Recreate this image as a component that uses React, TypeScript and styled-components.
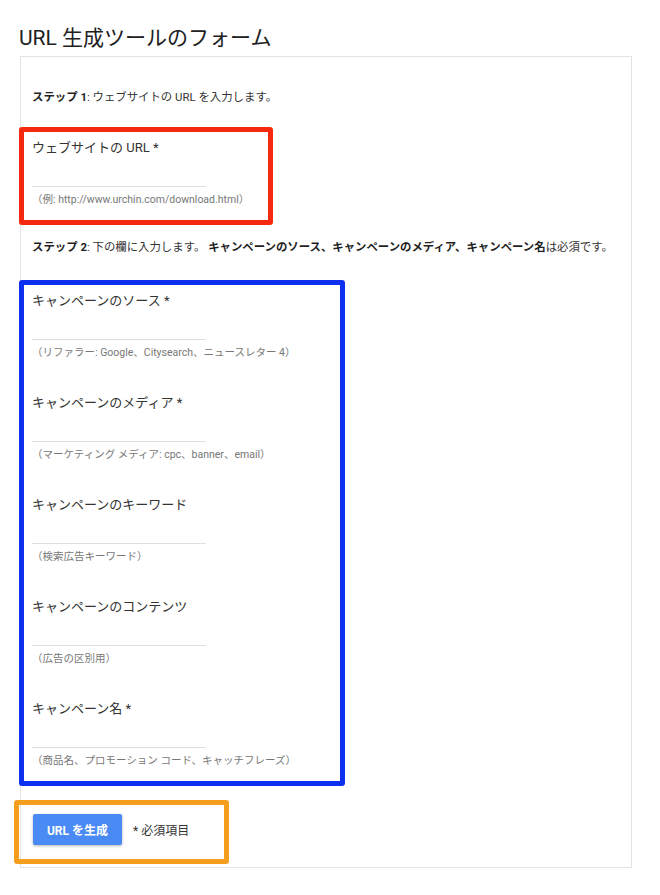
import styled, { createGlobalStyle } from "styled-components";

type Field = {
  label: string;
  required?: boolean;
  hint: string;
};

const GlobalStyle = createGlobalStyle`
  html, body {
    margin: 0;
    padding: 0;
    background: #ffffff;
  }
  body {
    font-family: "Roboto", "Noto Sans CJK JP", sans-serif;
    color: #333333;
  }
`;

const Page = styled.div`
  width: 660px;
  padding-left: 19px;
  box-sizing: border-box;
`;

const Title = styled.h1`
  margin: 24px 0 4px 0;
  font-size: 21px;
  line-height: 28px;
  font-weight: 400;
  color: #212121;
`;

const Card = styled.div`
  width: 612px;
  box-sizing: border-box;
  border: 1px solid #e3e3e3;
  padding: 32px 0 3px 11px;
  margin-left: 1px;
`;

const Step = styled.p<{ $top?: number }>`
  margin: ${(p) => p.$top ?? 0}px 0 0 0;
  font-size: 11.4px;
  line-height: 16px;
  color: #333333;
  b {
    font-weight: 700;
    color: #1f1f1f;
  }
`;

const Highlight = styled.div<{ $color: string; $width: number; $top: number }>`
  width: ${(p) => p.$width}px;
  box-sizing: border-box;
  border: 5px solid ${(p) => p.$color};
  border-radius: 3px;
  margin-left: -13px;
  margin-top: ${(p) => p.$top}px;
  padding: 6px 0 12px 8px;
`;

const FieldList = styled.div`
  display: flex;
  flex-direction: column;
  gap: 32px;
`;

const FieldBox = styled.div`
  display: flex;
  flex-direction: column;
`;

const Label = styled.label`
  font-size: 13px;
  line-height: 20px;
  color: #333333;
`;

const Input = styled.div`
  width: 174px;
  height: 28px;
  border-bottom: 1px solid #e0e0e0;
`;

const Hint = styled.div`
  margin-top: 5px;
  font-size: 10.5px;
  line-height: 16px;
  color: #777777;
`;

const Actions = styled.div`
  width: 215px;
  box-sizing: border-box;
  border: 5px solid #f59d1c;
  border-radius: 3px;
  margin: 14px 0 0 -18px;
  padding: 9px 0 14px 14px;
  display: flex;
  align-items: center;
  gap: 11px;
`;

const Button = styled.button`
  width: 89px;
  height: 31px;
  border: none;
  border-radius: 2px;
  background: #4a8af4;
  color: #ffffff;
  font-family: "Roboto", "Noto Sans CJK JP", sans-serif;
  font-size: 12px;
  font-weight: 700;
  box-shadow: 0 1px 3px rgba(0, 0, 0, 0.3);
  padding: 0;
`;

const Note = styled.span`
  font-size: 12px;
  color: #333333;
`;

const fields: Field[] = [
  {
    label: "キャンペーンのソース",
    required: true,
    hint: "（リファラー: Google、Citysearch、ニュースレター 4）",
  },
  {
    label: "キャンペーンのメディア",
    required: true,
    hint: "（マーケティング メディア: cpc、banner、email）",
  },
  { label: "キャンペーンのキーワード", hint: "（検索広告キーワード）" },
  { label: "キャンペーンのコンテンツ", hint: "（広告の区別用）" },
  {
    label: "キャンペーン名",
    required: true,
    hint: "（商品名、プロモーション コード、キャッチフレーズ）",
  },
];

const FormField = ({ label, required, hint }: Field) => (
  <FieldBox>
    <Label>
      {label}
      {required ? " *" : ""}
    </Label>
    <Input />
    <Hint>{hint}</Hint>
  </FieldBox>
);

export default function App() {
  return (
    <Page>
      <GlobalStyle />
      <Title>URL 生成ツールのフォーム</Title>
      <Card>
        <Step>
          <b>ステップ 1</b>: ウェブサイトの URL を入力します。
        </Step>
        <Highlight $color="#f4290f" $width={254} $top={22}>
          <FormField
            label="ウェブサイトの URL"
            required
            hint="（例: http://www.urchin.com/download.html）"
          />
        </Highlight>
        <Step $top={14}>
          <b>ステップ 2</b>: 下の欄に入力します。{" "}
          <b>キャンペーンのソース、キャンペーンのメディア、キャンペーン名</b>
          は必須です。
        </Step>
        <Highlight $color="#0d2ff0" $width={326} $top={25}>
          <FieldList>
            {fields.map((f, i) => (
              <FormField key={i} {...f} />
            ))}
          </FieldList>
        </Highlight>
        <Actions>
          <Button>URL を生成</Button>
          <Note>* 必須項目</Note>
        </Actions>
      </Card>
    </Page>
  );
}
